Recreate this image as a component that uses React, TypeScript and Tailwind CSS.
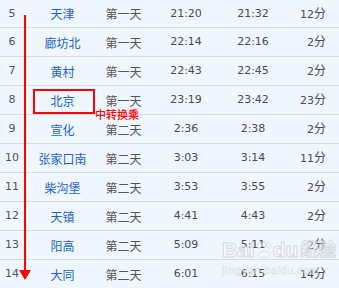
import React from 'react'

type Stop = { no: number; name: string; day: string; arrive: string; depart: string; stay: string }

const stops: Stop[] = [
  { no: 5, name: '天津', day: '第一天', arrive: '21:20', depart: '21:32', stay: '12' },
  { no: 6, name: '廊坊北', day: '第一天', arrive: '22:14', depart: '22:16', stay: '2' },
  { no: 7, name: '黄村', day: '第一天', arrive: '22:43', depart: '22:45', stay: '2' },
  { no: 8, name: '北京', day: '第一天', arrive: '23:19', depart: '23:42', stay: '23' },
  { no: 9, name: '宣化', day: '第二天', arrive: '2:36', depart: '2:38', stay: '2' },
  { no: 10, name: '张家口南', day: '第二天', arrive: '3:03', depart: '3:14', stay: '11' },
  { no: 11, name: '柴沟堡', day: '第二天', arrive: '3:53', depart: '3:55', stay: '2' },
  { no: 12, name: '天镇', day: '第二天', arrive: '4:41', depart: '4:43', stay: '2' },
  { no: 13, name: '阳高', day: '第二天', arrive: '5:09', depart: '5:11', stay: '2' },
  { no: 14, name: '大同', day: '第二天', arrive: '6:01', depart: '6:15', stay: '14' },
]

const num = "font-['DejaVu_Sans','Noto_Sans_CJK_SC',sans-serif] text-[11px]"
const cjk = "font-['Noto_Sans_CJK_SC',sans-serif] text-[12px]"

export default function App() {
  return (
    <div className="relative w-[339px] h-[288px] overflow-hidden bg-[#eff6fd]">
      {/* timetable rows */}
      <div className="flex flex-col">
        {stops.map((s, i) => (
          <div
            key={s.no}
            className={`flex items-center border-b border-[#d6dbe2] ${i === 0 ? 'h-[28px] pt-[1px]' : 'h-[29px] pt-[1px]'}`}
          >
            <div className={`w-[24px] text-center text-[#4f5260] ${num}`}>{s.no}</div>
            <div className={`w-[77px] text-center text-[#1a64c8] ${cjk}`}>{s.name}</div>
            <div className={`w-[45px] text-center text-[#555] ${cjk}`}>{s.day}</div>
            <div className={`w-[80px] text-center text-[#4a4a55] ${num}`}>{s.arrive}</div>
            <div className={`w-[54px] text-center text-[#4a4a55] ${num}`}>{s.depart}</div>
            <div className={`flex-1 pr-[13px] text-right text-[#4a4a55] ${num}`}>
              {s.stay}
              <span className="text-[12px]">分</span>
            </div>
          </div>
        ))}
      </div>

      {/* red arrow annotation */}
      <div className="absolute left-[24px] top-[15px] h-[257px] w-[2px] bg-[#ff0000]" />
      <svg className="absolute left-[19px] top-[270px]" width="12" height="11" viewBox="0 0 12 11">
        <polygon points="0,0 12,0 6,10" fill="#ff0000" />
      </svg>

      {/* transfer box */}
      <div className="absolute left-[33px] top-[89px] h-[25px] w-[62px] border-2 border-[#ff0000]" />
      <div className="absolute left-[95px] top-[106px] whitespace-nowrap font-['Noto_Sans_CJK_SC',sans-serif] text-[11px] font-medium leading-[16px] text-[#ff0000]">
        中转换乘
      </div>

      {/* watermark */}
      <div className="pointer-events-none absolute left-[222px] top-[238px] flex w-[110px] flex-col items-start opacity-70">
        <div className="flex items-center whitespace-nowrap font-['Liberation_Sans','Noto_Sans_CJK_SC',sans-serif] text-[21px] font-bold leading-[24px] text-white [-webkit-text-stroke:1px_#c9ced6]">
          <span>Bai</span>
          <svg width="16" height="18" viewBox="0 0 18 20" className="mx-[1px] shrink-0">
            <g fill="#fff" stroke="#c9ced6" strokeWidth="1">
              <ellipse cx="4" cy="5" rx="2.2" ry="3" />
              <ellipse cx="9" cy="3.5" rx="2.2" ry="3" />
              <ellipse cx="14" cy="5" rx="2.2" ry="3" />
              <path d="M3 16 C3 10 15 10 15 16 C15 19 3 19 3 16 Z" />
            </g>
          </svg>
          <span>du</span>
          <span className="ml-[2px] text-[18px]">经验</span>
        </div>
        <div className="mt-[3px] whitespace-nowrap font-['DejaVu_Sans',sans-serif] text-[10px] leading-[12px] tracking-[0.3px] text-white [-webkit-text-stroke:0.5px_#cfd4db]">
          jingyan.baidu.com
        </div>
      </div>
    </div>
  )
}
